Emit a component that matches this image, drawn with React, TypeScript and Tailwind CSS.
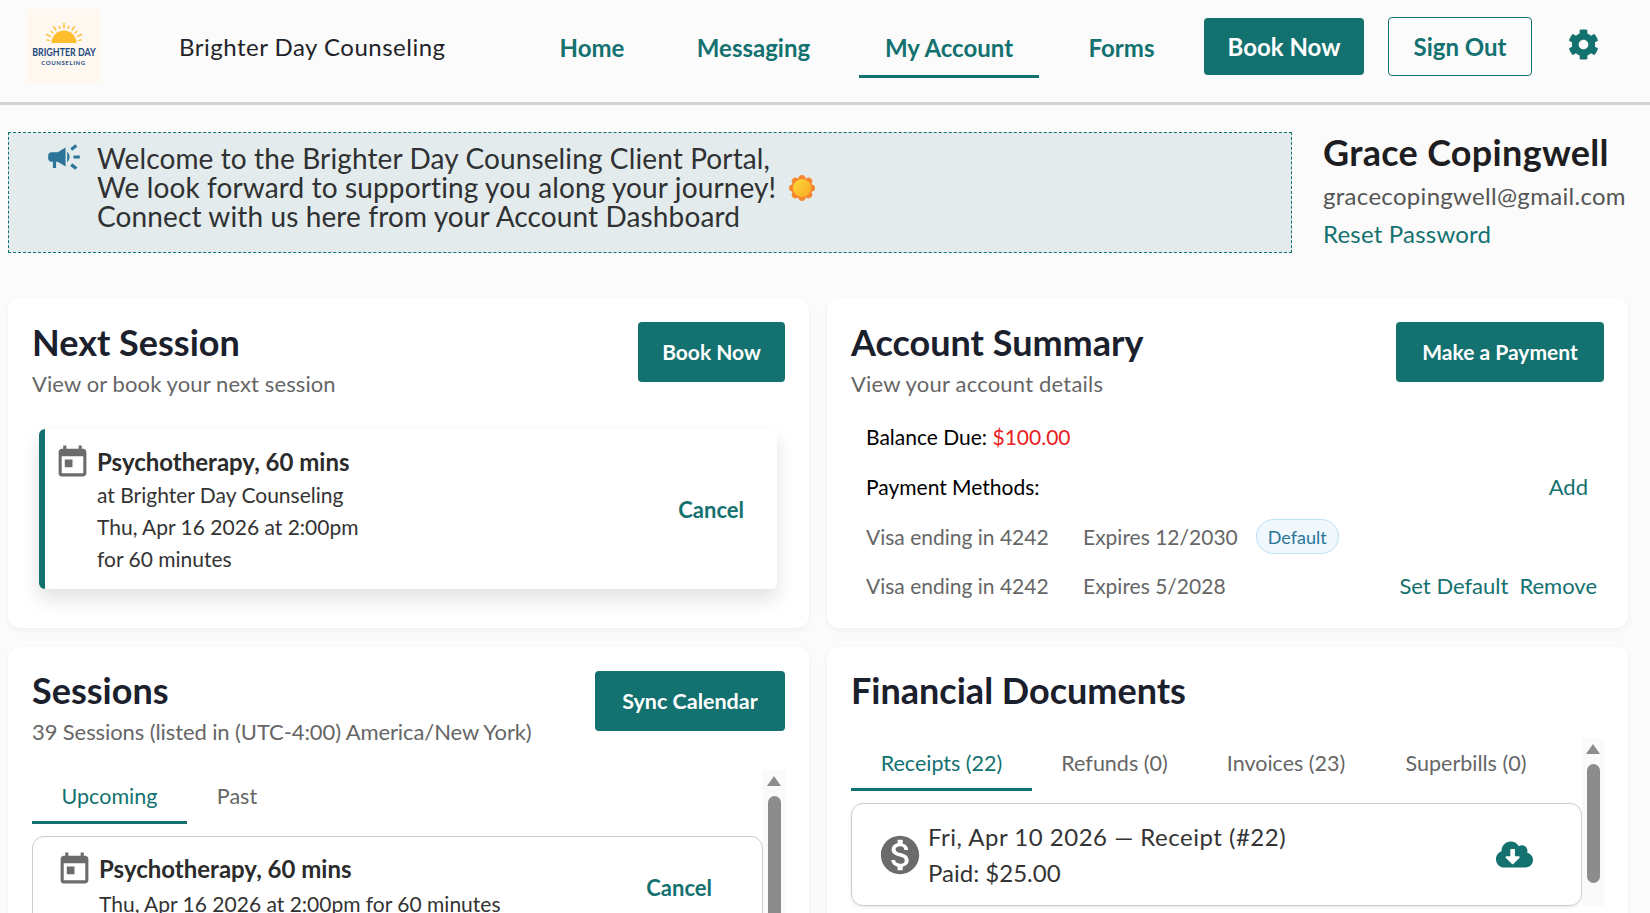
import { FaCloudDownloadAlt, FaCog } from 'react-icons/fa';
import { MdCampaign, MdMonetizationOn, MdToday } from 'react-icons/md';

function LogoMark() {
  const rays = [-80, -64, -48, -32, -16, 0, 16, 32, 48, 64, 80];
  return (
    <div className="flex h-[74px] w-[75px] flex-col items-center bg-[#fff8f1] pt-[13px]">
      <svg width="40" height="22" viewBox="0 0 40 22">
        <path d="M7.5 21a12.5 12.5 0 0 1 25 0z" fill="#fdbd2c" />
        {rays.map((r, i) => (
          <line
            key={r}
            x1="20"
            y1="6.5"
            x2="20"
            y2={i % 2 === 1 ? 1 : 3}
            stroke="#fdc23a"
            strokeWidth="1.5"
            transform={`rotate(${r} 20 21)`}
          />
        ))}
      </svg>
      <div className="mt-[1px] scale-x-[0.74] text-[12px] leading-[13px] font-bold whitespace-nowrap text-[#1d4a80]">BRIGHTER DAY</div>
      <div className="mt-[1px] text-[6px] leading-[8px] font-bold tracking-[0.6px] whitespace-nowrap text-[#1d4a80]">COUNSELING</div>
    </div>
  );
}

function SunEmoji() {
  return (
    <svg width="28" height="28" viewBox="0 0 28 28" className="ml-3 shrink-0">
      <defs>
        <linearGradient id="sunFill" x1="0" y1="0" x2="1" y2="1">
          <stop offset="0" stopColor="#fdd835" />
          <stop offset="1" stopColor="#f9a825" />
        </linearGradient>
      </defs>
      {[0, 45, 90, 135, 180, 225, 270, 315].map((r) => (
        <circle key={r} cx="14" cy="4.5" r="3.5" fill="#f4892f" transform={`rotate(${r} 14 14)`} />
      ))}
      <circle cx="14" cy="14" r="10.5" fill="#f4892f" />
      <circle cx="14" cy="14" r="9" fill="url(#sunFill)" />
    </svg>
  );
}

function ScrollRail({ thumbHeight }: { thumbHeight: string }) {
  return (
    <div className="flex w-[22px] shrink-0 flex-col items-center bg-[#fafafa]">
      <div className="mt-[6px] h-0 w-0 border-x-[7px] border-b-[10px] border-x-transparent border-b-[#8c8c8c]" />
      <div className={`mt-[10px] w-[13px] rounded-full bg-[#8c8c8c] ${thumbHeight}`} />
    </div>
  );
}

function SessionTitle() {
  return (
    <div className="flex items-start">
      <MdToday className="text-[37px] text-[#6b6b6b]" />
      <div className="ml-[6px] text-[24px] leading-[36px] font-bold text-[#2b2b2b]">Psychotherapy, 60 mins</div>
    </div>
  );
}

export default function App() {
  return (
    <div className="h-[913px] w-[1650px] overflow-hidden bg-[#fbfbfb] font-[Lato,sans-serif]">
      <header className="flex h-[105px] items-start border-b-[3px] border-[#d4d4d4]">
        <div className="mt-[9px] ml-[26px]">
          <LogoMark />
        </div>
        <div className="mt-[30px] ml-[78px] w-[357px] text-[24px] leading-[34px] tracking-[0.5px] text-[#1f2328]">Brighter Day Counseling</div>
        <nav className="flex items-start gap-6 text-[24px] font-bold text-[#137170]">
          <a className="mt-[18px] flex h-[60px] w-[112px] items-center justify-center">Home</a>
          <a className="mt-[18px] flex h-[60px] w-[163px] items-center justify-center">Messaging</a>
          <a className="mt-[18px] flex h-[60px] w-[180px] items-center justify-center border-b-[3px] border-[#137170] pt-[3px]">My Account</a>
          <a className="mt-[18px] flex h-[60px] w-[117px] items-center justify-center">Forms</a>
          <button className="mt-[18px] flex h-[57px] w-[160px] items-center justify-center rounded-[4px] bg-[#137170] text-white">Book Now</button>
          <button className="mt-[17px] flex h-[59px] w-[144px] items-center justify-center rounded-[4px] border border-[#137170] text-[#137170]">Sign Out</button>
        </nav>
        <FaCog className="mt-[29px] ml-9 text-[31px] text-[#137170]" />
      </header>

      <section className="mt-[27px] flex items-start pl-2">
        <div className="flex h-[121px] w-[1284px] border border-dashed border-[#137170] bg-[#e3ebec] pt-[11px] pl-[36px]">
          <MdCampaign className="mt-[-6px] shrink-0 text-[38px] text-[#2a7598]" />
          <div className="ml-[14px] text-[28px] leading-[29px] tracking-[0.12px] text-[#2f3133]">
            <div className="h-[29px]">Welcome to the Brighter Day Counseling Client Portal,</div>
            <div className="flex h-[29px] items-center">
              We look forward to supporting you along your journey!
              <SunEmoji />
            </div>
            <div className="h-[29px]">Connect with us here from your Account Dashboard</div>
          </div>
        </div>
        <div className="ml-[31px] whitespace-nowrap">
          <div className="mt-[-1px] text-[36px] leading-[42px] font-bold tracking-[0.3px] text-[#1e1e22]">Grace Copingwell</div>
          <div className="mt-[8px] text-[24px] leading-[30px] tracking-[0.3px] text-[#555]">gracecopingwell@gmail.com</div>
          <a className="mt-[8px] block text-[24px] leading-[30px] tracking-[0.2px] text-[#137170]">Reset Password</a>
        </div>
      </section>

      <main className="mt-[45px] grid grid-cols-[801px_801px] gap-x-[18px] gap-y-[19px] pl-2">
        <div className="h-[330px] rounded-xl bg-white px-6 pt-6 shadow-[0_2px_6px_rgba(0,0,0,0.05)]">
          <div className="flex items-start justify-between">
            <div>
              <h2 className="mt-[-1px] text-[36px] leading-[42px] font-bold text-[#1a202c]">Next Session</h2>
              <p className="mt-[6px] text-[22px] leading-[30px] tracking-[0.1px] text-[#666]">View or book your next session</p>
            </div>
            <button className="h-[60px] w-[147px] rounded-[4px] bg-[#137170] text-[21px] font-bold text-white">Book Now</button>
          </div>
          <div className="mt-[30px] ml-[7px] flex h-[160px] w-[738px] items-center rounded-[6px] border-l-[6px] border-[#137170] bg-white pr-[33px] pl-[9px] shadow-[0_10px_20px_rgba(0,0,0,0.12)]">
            <div className="flex-1 self-start pt-[15px]">
              <SessionTitle />
              <div className="mt-[-2px] ml-[43px] text-[21px] leading-[32px] text-[#333]">
                <div>at Brighter Day Counseling</div>
                <div>Thu, Apr 16 2026 at 2:00pm</div>
                <div>for 60 minutes</div>
              </div>
            </div>
            <a className="text-[22px] font-bold text-[#137170]">Cancel</a>
          </div>
        </div>

        <div className="h-[330px] rounded-xl bg-white px-6 pt-6 shadow-[0_2px_6px_rgba(0,0,0,0.05)]">
          <div className="flex items-start justify-between">
            <div>
              <h2 className="mt-[-1px] text-[36px] leading-[42px] font-bold text-[#1a202c]">Account Summary</h2>
              <p className="mt-[6px] text-[22px] leading-[30px] tracking-[0.2px] text-[#666]">View your account details</p>
            </div>
            <button className="h-[60px] w-[208px] rounded-[4px] bg-[#137170] text-[21px] font-bold text-white">Make a Payment</button>
          </div>
          <div className="mt-[23px] pl-[15px] text-[21px] leading-[30px] text-[#666]">
            <div className="text-black">
              Balance Due: <span className="text-[#e8201f]">$100.00</span>
            </div>
            <div className="mt-[20px] flex justify-between pr-[16px] text-black">
              <span>Payment Methods:</span>
              <a className="text-[22px] text-[#137170]">Add</a>
            </div>
            <div className="mt-[17px] flex items-center">
              <span className="w-[217px]">Visa ending in 4242</span>
              <span>Expires 12/2030</span>
              <span className="ml-[18px] flex h-[35px] w-[83px] items-center justify-center rounded-full border border-[#bde0f5] bg-[#f0f8fe] text-[18px] text-[#2a7598]">Default</span>
            </div>
            <div className="mt-[17px] flex items-center">
              <span className="w-[217px]">Visa ending in 4242</span>
              <span>Expires 5/2028</span>
              <a className="ml-auto text-[22px] text-[#137170]">Set Default</a>
              <a className="mr-[7px] ml-[11px] text-[22px] text-[#137170]">Remove</a>
            </div>
          </div>
        </div>

        <div className="h-[330px] rounded-xl bg-white px-6 pt-6 shadow-[0_2px_6px_rgba(0,0,0,0.05)]">
          <div className="flex items-start justify-between">
            <div>
              <h2 className="mt-[-2px] text-[36px] leading-[42px] font-bold text-[#1a202c]">Sessions</h2>
              <p className="mt-[6px] text-[22px] leading-[30px] tracking-[-0.1px] text-[#666]">39 Sessions (listed in (UTC-4:00) America/New York)</p>
            </div>
            <button className="h-[60px] w-[190px] rounded-[4px] bg-[#137170] text-[21.5px] font-bold text-white">Sync Calendar</button>
          </div>
          <div className="mt-[23px] flex">
            <div className="w-[731px]">
              <div className="flex text-[21.5px] text-[#666]">
                <a className="flex h-[54px] w-[155px] items-center justify-center border-b-[3px] border-[#137170] pt-[1px] text-[#137170]">Upcoming</a>
                <a className="flex h-[54px] w-[100px] items-center justify-center pb-[2px]">Past</a>
              </div>
              <div className="mt-[12px] flex h-[120px] items-start rounded-xl border border-[#ccc] pr-[50px] pl-[23px]">
                <div className="flex-1 pt-[14px]">
                  <SessionTitle />
                  <div className="ml-[43px] text-[21px] leading-[32px] text-[#333]">Thu, Apr 16 2026 at 2:00pm for 60 minutes</div>
                </div>
                <a className="mt-[34px] text-[22px] font-bold text-[#137170]">Cancel</a>
              </div>
            </div>
            <ScrollRail thumbHeight="h-[200px]" />
          </div>
        </div>

        <div className="h-[330px] rounded-xl bg-white px-6 pt-6 shadow-[0_2px_6px_rgba(0,0,0,0.05)]">
          <h2 className="mt-[-2px] text-[36px] leading-[42px] font-bold text-[#1a202c]">Financial Documents</h2>
          <div className="mt-[27px] flex">
            <div className="w-[731px]">
              <div className="flex text-[21.5px] text-[#666]">
                <a className="flex h-[53px] w-[181px] items-center justify-center border-b-[3px] border-[#137170] text-[#137170]">Receipts (22)</a>
                <a className="flex h-[53px] w-[165px] items-center justify-center pb-[3px]">Refunds (0)</a>
                <a className="flex h-[53px] w-[178px] items-center justify-center pb-[3px]">Invoices (23)</a>
                <a className="flex h-[53px] w-[182px] items-center justify-center pb-[3px]">Superbills (0)</a>
              </div>
              <div className="mt-[12px] flex h-[103px] items-center rounded-xl border border-[#ccc] pr-[48px] pl-[25px] shadow-[0_1px_3px_rgba(0,0,0,0.1)]">
                <MdMonetizationOn className="shrink-0 text-[46px] text-[#6b6b6b]" />
                <div className="ml-[5px] flex-1 text-[24px] leading-[36px] text-[#333]">
                  <div className="tracking-[0.5px]">Fri, Apr 10 2026 — Receipt (#22)</div>
                  <div>Paid: $25.00</div>
                </div>
                <FaCloudDownloadAlt className="text-[37px] text-[#137170]" />
              </div>
            </div>
            <ScrollRail thumbHeight="h-[119px]" />
          </div>
        </div>
      </main>
    </div>
  );
}
